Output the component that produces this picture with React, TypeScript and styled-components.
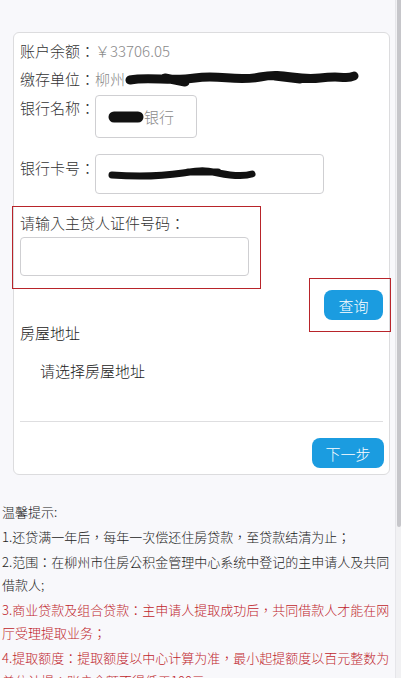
import styled, { createGlobalStyle } from 'styled-components';

const GlobalStyle = createGlobalStyle`
    html, body {
        margin: 0;
        padding: 0;
        height: 678px;
        overflow: hidden;
        background: #f8f8fb;
    }
    body {
        font-family: "Noto Sans CJK TC", "Noto Sans CJK SC", "Noto Sans", sans-serif;
        color: #333;
    }
`;

const Page = styled.div`
    position: relative;
    padding-top: 32px;
`;

const Card = styled.div`
    box-sizing: border-box;
    margin-left: 13px;
    width: 377px;
    background: #fff;
    border: 1px solid #dcdcde;
    border-radius: 6px;
    padding: 4px 5px 6px 6px;
    display: flex;
    flex-direction: column;
`;

const InfoRow = styled.div<{ $gap?: number }>`
    display: flex;
    align-items: flex-start;
    margin-top: ${({ $gap }) => $gap ?? 0}px;
    font-size: 15px;
    line-height: 28px;
    white-space: nowrap;
`;

const Label = styled.span`
    color: #333;
    font-weight: 300;
`;

const Value = styled.span`
    color: #8a8a8a;
    font-weight: 300;
    display: inline-flex;
    align-items: center;
`;

const Field = styled.div<{ $w: number; $h: number; $top?: number }>`
    box-sizing: border-box;
    width: ${({ $w }) => $w}px;
    height: ${({ $h }) => $h}px;
    margin-top: ${({ $top }) => $top ?? 0}px;
    border: 1px solid #cfcfd2;
    border-radius: 4px;
    background: #fff;
    display: flex;
    align-items: center;
    padding-left: 12px;
    font-size: 15px;
    color: #8a8a8a;
    font-weight: 300;
`;

const Highlight = styled.div`
    box-sizing: border-box;
    border: 1px solid #b8242a;
`;

const IdBox = styled(Highlight)`
    width: 249px;
    margin: 12px 0 0 -8px;
    padding: 2px 0 12px 7px;
`;

const IdLabel = styled.div`
    font-size: 15px;
    line-height: 28px;
    color: #333;
    font-weight: 300;
`;

const IdInput = styled.input`
    box-sizing: border-box;
    width: 229px;
    height: 39px;
    border: 1px solid #cfcfd2;
    border-radius: 4px;
    background: #fff;
    outline: none;
    display: block;
`;

const QueryBox = styled(Highlight)`
    align-self: flex-end;
    width: 82px;
    margin: -11px -7px 0 0;
    padding: 11px 0 11px 14px;
`;

const BlueButton = styled.button<{ $w: number }>`
    width: ${({ $w }) => $w}px;
    height: 30px;
    border: none;
    border-radius: 8px;
    background: #1b9ce0;
    color: #fff;
    font-family: inherit;
    font-size: 15px;
    font-weight: 300;
    padding: 0;
    cursor: pointer;
`;

const SectionTitle = styled.div`
    margin-top: -13px;
    font-size: 15px;
    line-height: 28px;
    color: #222;
    font-weight: 300;
`;

const AddressPicker = styled.div`
    margin-top: 10px;
    padding-left: 20px;
    font-size: 15px;
    line-height: 28px;
    color: #222;
    font-weight: 300;
`;

const Divider = styled.hr`
    margin: 36px 0 0;
    width: 363px;
    border: none;
    border-top: 1px solid #dedee0;
`;

const Footer = styled.div`
    display: flex;
    justify-content: flex-end;
    margin-top: 16px;
`;

const Tips = styled.div`
    margin-top: 25px;
    padding: 0 8px 0 2px;
    font-size: 13px;
    line-height: 23px;
    font-weight: 300;
`;

const Tip = styled.p<{ $red?: boolean }>`
    margin: 0 0 2px;
    color: ${({ $red }) => ($red ? '#c0262c' : '#222')};
`;

const ScrollTrack = styled.div`
    position: fixed;
    top: 0;
    right: 0;
    width: 5px;
    height: 678px;
    background: #f1f1f3;
    border-left: 1px solid #e6e6ea;
`;

const ScrollThumb = styled.div`
    width: 4px;
    margin-left: 1px;
    height: 527px;
    background: #c6c6ca;
    border-radius: 0 0 2px 2px;
`;

function Scribble({ w, h, d, sw }: { w: number; h: number; d: string; sw: number }) {
    return (
        <svg width={w} height={h} viewBox={`0 0 ${w} ${h}`} style={{ display: 'block' }}>
            <path d={d} fill="none" stroke="#111" strokeWidth={sw} strokeLinecap="round" strokeLinejoin="round" />
        </svg>
    );
}

export default function App() {
    return (
        <>
            <GlobalStyle />
            <Page>
                <Card>
                    <InfoRow>
                        <Label>账户余额：</Label>
                        <Value>￥33706.05</Value>
                    </InfoRow>
                    <InfoRow>
                        <Label>缴存单位：</Label>
                        <Value>
                            柳州
                            <Scribble
                                w={234}
                                h={18}
                                sw={9}
                                d="M5 10 C 25 6, 45 12, 70 8 S 110 12, 135 7 S 170 11, 195 8 S 220 10, 229 6 M40 8 L 60 12 M150 6 L 175 9"
                            />
                        </Value>
                    </InfoRow>
                    <InfoRow $gap={1}>
                        <Label>银行名称：</Label>
                        <Field $w={102} $h={43} $top={1}>
                            <Scribble w={36} h={16} sw={11} d="M6 8 L 30 8" />
                            银行
                        </Field>
                    </InfoRow>
                    <InfoRow $gap={16}>
                        <Label>银行卡号：</Label>
                        <Field $w={229} $h={40}>
                            <Scribble
                                w={148}
                                h={20}
                                sw={7}
                                d="M4 11 C 30 13, 55 12, 75 9 S 95 6, 110 9 S 135 13, 144 10 M80 8 L 110 8"
                            />
                        </Field>
                    </InfoRow>
                    <IdBox>
                        <IdLabel>请输入主贷人证件号码：</IdLabel>
                        <IdInput />
                    </IdBox>
                    <QueryBox>
                        <BlueButton $w={59}>查询</BlueButton>
                    </QueryBox>
                    <SectionTitle>房屋地址</SectionTitle>
                    <AddressPicker>请选择房屋地址</AddressPicker>
                    <Divider />
                    <Footer>
                        <BlueButton $w={72}>下一步</BlueButton>
                    </Footer>
                </Card>
                <Tips>
                    <Tip>温馨提示:</Tip>
                    <Tip>1.还贷满一年后，每年一次偿还住房贷款，至贷款结清为止；</Tip>
                    <Tip>2.范围：在柳州市住房公积金管理中心系统中登记的主申请人及共同借款人;</Tip>
                    <Tip $red>3.商业贷款及组合贷款：主申请人提取成功后，共同借款人才能在网厅受理提取业务；</Tip>
                    <Tip $red>4.提取额度：提取额度以中心计算为准，最小起提额度以百元整数为单位计提；账户余额不得低于100元。</Tip>
                </Tips>
                <ScrollTrack>
                    <ScrollThumb />
                </ScrollTrack>
            </Page>
        </>
    );
}
